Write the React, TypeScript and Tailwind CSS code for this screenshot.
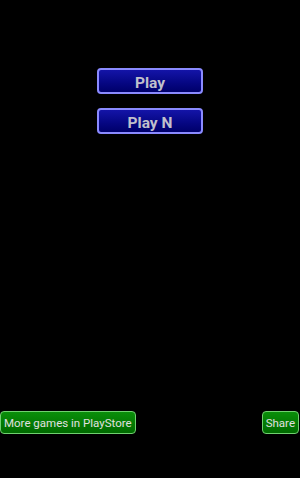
export default function App() {
  return (
    <div className="w-[300px] h-[478px] bg-black flex flex-col" style={{ fontFamily: "Roboto, 'Liberation Sans', sans-serif" }}>
      <div className="flex flex-col items-center pt-[68px] gap-[14px]">
        <button className="w-[106px] h-[26px] rounded-[4px] border-2 border-[#8a8aff] bg-gradient-to-b from-[#1414a8] to-[#00006a] text-[#c0c0cc] font-bold text-[15.5px] leading-none flex items-center justify-center pt-[5px]">
          Play
        </button>
        <button className="w-[106px] h-[26px] rounded-[4px] border-2 border-[#8a8aff] bg-gradient-to-b from-[#1414a8] to-[#00006a] text-[#c0c0cc] font-bold text-[15.5px] leading-none flex items-center justify-center pt-[5px]">
          Play N
        </button>
      </div>
      <div className="flex-1" />
      <div className="flex justify-between items-center mb-[44px]">
        <button className="h-[23px] px-[3px] rounded-[4px] border border-[#6fd06f] bg-gradient-to-b from-[#0a8f0a] to-[#006a00] text-[#e0e0e0] text-[11.5px] leading-none flex items-center pt-[3px]">
          More games in PlayStore
        </button>
        <button className="h-[23px] px-[3px] mr-[1px] rounded-[4px] border border-[#6fd06f] bg-gradient-to-b from-[#0a8f0a] to-[#006a00] text-[#e0e0e0] text-[11.5px] leading-none flex items-center pt-[3px]">
          Share
        </button>
      </div>
    </div>
  );
}
